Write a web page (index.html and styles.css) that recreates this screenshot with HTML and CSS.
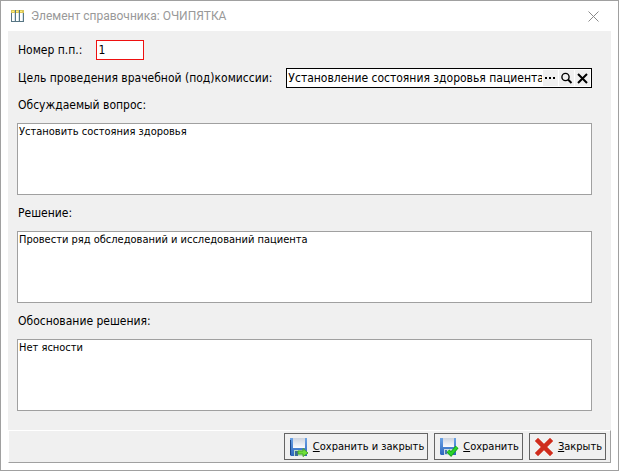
FILE: index.html
```html
<!DOCTYPE html>
<html lang="ru">

<head>
    <meta charset="utf-8">
    <title>Элемент справочника: ОЧИПЯТКА</title>
    <link rel="stylesheet" href="styles.css">
</head>

<body>
    <div class="window">
        <header class="titlebar">
            <svg class="title-icon" width="13" height="13" viewBox="0 0 13 13" shape-rendering="crispEdges">
                <rect width="13" height="12" fill="#587684"/>
                <path d="M1 3h3v8H1zM5 3h3v8H5zM9 3h3v8H9z" fill="#fff"/>
                <path d="M3 3h1v8H3zM7 3h1v8H7zM11 3h1v8h-1z" fill="#d5e4ec"/>
                <path d="M0 0h4v3H0zM5 0h3v3H5zM9 0h4v3H9z" fill="#d9c65a"/>
                <path d="M1 1h2v1H1zM5 1h2v1H5zM9 1h2v1H9z" fill="#fff27a"/>
            </svg>
            <h1 class="title">Элемент справочника: ОЧИПЯТКА</h1>
            <button class="window-close" type="button" aria-label="Закрыть окно">
                <svg width="11" height="11" viewBox="0 0 11 11"><path d="M.5.5l10 10M10.500.5l-10 10" stroke="#8a8a8a" fill="none"/></svg>
            </button>
        </header>

        <form class="form">
            <div class="fields">
                <div class="row">
                    <label for="number">Номер п.п.:</label>
                    <input class="input number" type="text" id="number" name="number" value="1">
                </div>
                <div class="row">
                    <label for="purpose">Цель проведения врачебной (под)комиссии:</label>
                    <div class="picker">
                        <input class="picker-input" type="text" id="purpose" name="purpose" value="Установление состояния здоровья пациента">
                        <button class="picker-button" type="button" aria-label="Выбрать">
                            <svg width="15" height="16" viewBox="0 0 15 16" shape-rendering="crispEdges"><path d="M2 7h2v2H2zM6 7h2v2H6zM10 7h2v2h-2z"/></svg>
                        </button>
                        <button class="picker-button" type="button" aria-label="Найти">
                            <svg width="15" height="16" viewBox="0 0 15 16" fill="none" stroke="#000"><circle cx="6.500" cy="7" r="3.600" stroke-width="1.400"/><path d="M9 9.500l3.500 3.500" stroke-width="2"/></svg>
                        </button>
                        <button class="picker-button" type="button" aria-label="Очистить">
                            <svg width="15" height="16" viewBox="0 0 15 16"><path d="M3 4l9 9M12 4l-9 9" stroke="#000" stroke-width="2"/></svg>
                        </button>
                    </div>
                </div>
                <label class="area-label" for="question">Обсуждаемый вопрос:</label>
                <textarea class="area" id="question" name="question">Установить состояния здоровья</textarea>
                <label class="area-label" for="decision">Решение:</label>
                <textarea class="area" id="decision" name="decision">Провести ряд обследований и исследований пациента</textarea>
                <label class="area-label" for="reason">Обоснование решения:</label>
                <textarea class="area" id="reason" name="reason">Нет ясности</textarea>
            </div>

            <footer class="toolbar">
                <button class="button" type="submit">
                    <svg width="20" height="20" viewBox="0 0 20 20">
                        <defs>
                            <linearGradient id="disk" x1="0" y1="0" x2="0" y2="1">
                                <stop offset="0" stop-color="#6ba3e6"/>
                                <stop offset="1" stop-color="#2c66bd"/>
                            </linearGradient>
                            <linearGradient id="paper" x1="0" y1="0" x2="0" y2="1">
                                <stop offset="0" stop-color="#cdd3de"/>
                                <stop offset="1" stop-color="#fafbfd"/>
                            </linearGradient>
                        </defs>
                        <path d="M1 1h17v18H2l-1-1z" fill="url(#disk)"/>
                        <path d="M1 3h1v15H1z" fill="#1b4688"/>
                        <path d="M4 1h12v10H4z" fill="url(#paper)"/>
                        <path d="M5 13h11v6H5z" fill="#b8dcc4"/>
                        <path d="M6 14h3v5H6z" fill="#3a6a94"/>
                        <path d="M9 14h5v-2.500l5 4.500-5 3.500V17H9z" fill="#6fe03a" stroke="#4aa52c"/>
                    </svg>
                    <span><u>С</u>охранить и закрыть</span>
                </button>
                <button class="button" type="button">
                    <svg width="20" height="20" viewBox="0 0 20 20">
                        <path d="M1 1h16v17H2l-1-1z" fill="url(#disk)"/>
                        <path d="M4 1h11v9H4z" fill="url(#paper)"/>
                        <path d="M5 12h9v6H5z" fill="#c9d8e6"/>
                        <path d="M6 13h2v4H6z" fill="#4678ae"/>
                        <path d="M9 14l3 3 6-7" fill="none" stroke="#1da81d" stroke-width="4"/>
                        <path d="M9 14l3 3 6-7" fill="none" stroke="#2bd62b" stroke-width="2"/>
                    </svg>
                    <span><u>С</u>охранить</span>
                </button>
                <button class="button" type="button">
                    <svg width="20" height="20" viewBox="0 0 20 20">
                        <path d="M4 1l6 6 6-6 3 3-6 6 6 6-3 3-6-6-6 6-3-3 6-6-6-6z" fill="#cf2c1d" stroke="#dd6a5d"/>
                    </svg>
                    <span><u>З</u>акрыть</span>
                </button>
            </footer>
        </form>
    </div>
</body>

</html>
```

FILE: styles.css
```css
* {
    box-sizing: border-box;
}

body {
    margin: 0;
    font-family: "DejaVu Sans Condensed", "Noto Sans", sans-serif;
    font-size: 12px;
    line-height: 18px;
    color: #000;
}

button,
input,
textarea {
    margin: 0;
    font: inherit;
    color: inherit;
}

.window {
    display: flex;
    flex-direction: column;
    min-height: 100vh;
    padding: 0 7px 7px;
    border: 1px solid #a0a0a0;
    background-color: #fff;
}

.titlebar {
    display: flex;
    align-items: center;
    gap: 7px;
    height: 30px;
    padding: 0 12px 0 3px;
}

.title {
    flex: 1;
    margin: 0;
    font-family: Roboto, sans-serif;
    font-size: 12px;
    font-weight: normal;
    color: #999;
}

.window-close {
    display: flex;
    padding: 0;
    border: none;
    background: none;
}

.form {
    flex: 1;
    display: flex;
    flex-direction: column;
    background-color: #f0f0f0;
}

.fields {
    flex: 1;
    display: flex;
    flex-direction: column;
    padding: 9px 19px 19px 9px;
}

.row {
    display: flex;
    align-items: center;
    gap: 14px;
    margin-bottom: 8px;
    padding-left: 1px;
}

.input,
.picker {
    height: 20px;
    border: 1px solid #000;
    background-color: #fff;
}

.number {
    width: 48px;
    padding: 0 1px;
    border-color: #ee1111;
}

.picker {
    flex: 1;
    display: flex;
    gap: 1px;
    padding: 1px;
}

.picker-input {
    flex: 1;
    min-width: 0;
    padding: 0;
    border: none;
}

.picker-button {
    display: flex;
    padding: 0;
    border: none;
    background-color: #f0f0f0;
}

.area-label {
    height: 27px;
    padding-left: 1px;
}

.area {
    flex: 1;
    min-height: 72px;
    margin-bottom: 9px;
    padding: 1px;
    border: 1px solid #a0a0a0;
    background-color: #fff;
    font-size: 11px;
    line-height: 14px;
    resize: none;
}

.area:last-child {
    margin-bottom: 0;
}

.toolbar {
    display: flex;
    justify-content: flex-end;
    gap: 6px;
    padding: 2px 4px 2px 0;
    border: 1px solid #a0a0a0;
    border-top-color: #fff;
    border-left-color: #fff;
}

.button {
    display: flex;
    align-items: center;
    gap: 4px;
    height: 27px;
    padding: 0 3px 0 4px;
    border: 1px solid #646464;
    background-color: #f0f0f0;
    font-size: 11px;
}
```
